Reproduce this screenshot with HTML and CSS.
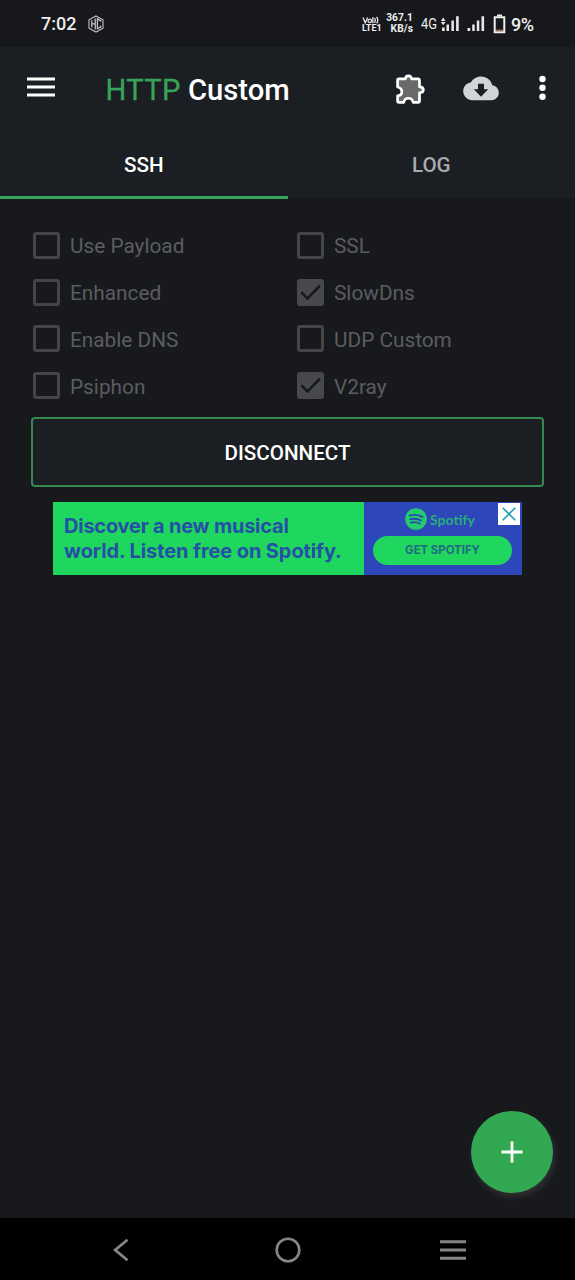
FILE: index.html
```html
<!DOCTYPE html>
<html lang="en">
<head>
<meta charset="utf-8">
<title>HTTP Custom</title>
<link rel="stylesheet" href="styles.css">
</head>
<body>
<div class="screen">
  <div class="status">
    <span class="clock">7:02</span>
    <svg class="hc" width="16" height="18" viewBox="0 0 16 18" fill="none" stroke="#c4c5c6" stroke-width="1.1">
      <path d="M8 .9 15 4.8v8.4L8 17.1 1 13.2V4.8z"/>
      <path d="M3.8 5.2v7.3M7.2 3.6v10.8M3.8 8.9h3.4M12.7 6.8V5.6L9.4 3.9v9.8l3.3-1.6v-1.5" stroke-width="1.3"/>
    </svg>
    <div class="volte">
      <svg width="19" height="8" viewBox="0 0 19 8" fill="none" stroke="#e8e8e8" stroke-width="1.3"><path d="M1 1.4 3.2 6.8 5.7 1.4M12.6 2.2q1.4 2 0 4.7M14.6.8q2.2 3 .2 6.6M10.9 1v6.3"/><circle cx="7.8" cy="4.9" r="1.7"/></svg>
      <span>LTE1</span>
    </div>
    <div class="speed"><span>367.1</span><span>KB/s</span></div>
    <span class="net">4G</span>
    <svg class="sig1" width="18" height="17" viewBox="0 0 18 17" fill="#e8e8e8">
      <path d="M-.1 5.9 2.2 2.6l2.3 3.3zM-.1 7.1h4.6L2.2 10.3zM1 12.5h2.7V16H1zM5.5 9.5H8V16H5.5zM10.4 5.5h2.5V16h-2.5zM15.1 1.3h2.6V16h-2.6z"/>
    </svg>
    <svg class="sig2" width="18" height="17" viewBox="0 0 18 17" fill="#e8e8e8">
      <path d="M.5 13.1h2.7V16H.5zM5.2 9.5h2.5V16H5.2zM9.8 5.5h2.5V16H9.8zM14.5 1.3h2.6V16h-2.6z"/>
    </svg>
    <svg class="battery" width="13" height="20" viewBox="0 0 13 20">
      <path d="M4 .5h5v2H4z" fill="#eee"/><path d="M1.7 3.2h9.6v15H1.7z" fill="none" stroke="#eee" stroke-width="2"/><path d="M3 16.2h7" stroke="#b98460" stroke-width="1.2"/>
    </svg>
    <span class="pct">9%</span>
  </div>

  <header class="head">
    <div class="toolbar">
      <svg class="menu" width="28" height="20" viewBox="0 0 28 20" stroke="#fff" stroke-width="2.9"><path d="M0 2h28M0 10h28M0 18h28"/></svg>
      <h1 class="title"><span class="accent">HTTP</span> Custom</h1>
      <svg class="puzzle" width="31" height="31" viewBox="0 0 30 30" fill="#6a6a6b" stroke="#fff" stroke-width="2.6" stroke-linejoin="round">
        <path d="M3.8 4.8H10C10.4 .9 15.6 .9 16 4.8h6.2q1.5 0 1.5 1.5v6.1c5 .2 5 5.6 0 5.8v7.9q0 1.4-1.4 1.4h-4.7c-1.2-5.4-8-5.4-9.2 0H3.7q-1.2 0-1.2-1.2v-5.1c5.5-.8 5.5-7.2 0-8.6V6q0-1.2 1.3-1.2z"/>
      </svg>
      <svg class="cloud" width="36" height="25" viewBox="0 0 36 25">
        <path d="M29.2 9.3C28.2 4.1 23.6.4 18 .4 13.6.4 9.8 2.8 7.9 6.5 3.4 7 .2 10.8.2 15.1c0 5 4.1 9.1 9.1 9.1h18.9c4.2 0 7.6-3.3 7.6-7.5 0-4-3-7.1-6.6-7.4z" fill="#d3d4d5"/>
        <path d="M15 7.8h6v5.5h4.2L18 20.7l-7.2-7.4H15z" fill="#1b1f23"/>
      </svg>
      <svg class="dots" width="7" height="26" viewBox="0 0 7 26" fill="#fff"><circle cx="3.5" cy="4" r="3.2"/><circle cx="3.5" cy="12.8" r="3.2"/><circle cx="3.5" cy="21.7" r="3.2"/></svg>
    </div>
    <nav class="tabs">
      <span class="tab active">SSH</span>
      <span class="tab">LOG</span>
    </nav>
  </header>

  <main class="main">
    <div class="options">
      <div class="opt"><i class="box"></i><span>Use Payload</span></div>
      <div class="opt"><i class="box"></i><span>SSL</span></div>
      <div class="opt"><i class="box"></i><span>Enhanced</span></div>
      <div class="opt"><i class="box on"><svg width="27" height="27" viewBox="0 0 26 26"><path d="M4.2 12.8 10.1 18.6 22 6.5" fill="none" stroke="#17191c" stroke-width="2.5"/></svg></i><span>SlowDns</span></div>
      <div class="opt"><i class="box"></i><span>Enable DNS</span></div>
      <div class="opt"><i class="box"></i><span>UDP Custom</span></div>
      <div class="opt"><i class="box"></i><span>Psiphon</span></div>
      <div class="opt"><i class="box on"><svg width="27" height="27" viewBox="0 0 26 26"><path d="M4.2 12.8 10.1 18.6 22 6.5" fill="none" stroke="#17191c" stroke-width="2.5"/></svg></i><span>V2ray</span></div>
    </div>
    <button class="disconnect">DISCONNECT</button>
    <div class="ad">
      <p class="adtext"><span class="line1">Discover a new musical</span><br><span class="line2">world. Listen free on Spotify.</span></p>
      <div class="adside">
        <div class="brand">
          <svg width="22" height="22" viewBox="0 0 22 22"><circle cx="11" cy="11" r="10.8" fill="#22cb6b"/><path d="M4.6 7.7q7-2 13 1.4M5.2 11.3q6-1.6 11 1.3M5.8 14.6q5-1.2 9 1.1" fill="none" stroke="#2c49b3" stroke-width="1.8" stroke-linecap="round"/></svg>
          <span>Spotify</span>
        </div>
        <div class="cta">GET SPOTIFY</div>
        <div class="close"><svg width="14" height="14" viewBox="0 0 14 14"><path d="M.7.7l12.6 12.6M13.3.7.7 13.3" stroke="#27a0b4" stroke-width="1.6"/></svg></div>
      </div>
    </div>
    <div class="fab"><svg width="22" height="22" viewBox="0 0 22 22"><path d="M11 .5v21M.5 11h21" stroke="#fff" stroke-width="2.8"/></svg></div>
  </main>

  <footer class="nav">
    <svg class="back" width="17" height="24" viewBox="0 0 17 24"><path d="M15.5 1.7 3.2 12l12.3 10.3" fill="none" stroke="#868686" stroke-width="2.8"/></svg>
    <svg class="home" width="26" height="26" viewBox="0 0 26 26"><circle cx="13" cy="13" r="11.3" fill="none" stroke="#868686" stroke-width="2.6"/></svg>
    <svg class="recent" width="26" height="20" viewBox="0 0 26 20"><path d="M0 1.7h26M0 10h26M0 18.3h26" stroke="#868686" stroke-width="2.9"/></svg>
  </footer>
</div>
</body>
</html>
```
FILE: styles.css
```css
* { box-sizing: border-box; }
body { margin: 0; background: #17191c; font-family: Roboto, "Liberation Sans", sans-serif; }
svg { display: block; flex: none; }
.screen { width: 575px; height: 1280px; display: flex; flex-direction: column; overflow: hidden; }

.status { height: 47px; flex: none; display: flex; align-items: center; padding-left: 41px; background: #17181b; color: #eee; white-space: nowrap; }
.clock { width: 35px; font-size: 18px; font-weight: 500; line-height: 20px; padding-top: 1px; }
.hc { margin-left: 12px; }
.volte { width: 20px; margin-left: 258px; display: flex; flex-direction: column; }
.volte span { font-size: 9px; font-weight: 700; line-height: 8px; }
.speed { width: 28px; margin-left: 4px; display: flex; flex-direction: column; align-items: flex-end; padding-right: 1px; font-size: 10.2px; font-weight: 700; line-height: 10.5px; letter-spacing: .1px; }
.net { width: 17px; margin-left: 7px; font-size: 15px; transform-origin: left; transform: scaleX(.86); }
.sig1 { margin-left: 3px; }
.sig2 { margin-left: 8px; }
.battery { margin-left: 8px; }
.pct { margin-left: 5px; font-size: 18px; font-weight: 500; letter-spacing: -.6px; padding-top: 1px; }

.head { height: 151px; flex: none; background: #1b1f23; }
.toolbar { height: 84px; display: flex; align-items: center; padding-left: 27px; }
.menu { margin-top: -4px; }
.title { margin: 1px 0 0 50.5px; width: 190px; font-size: 29.2px; font-weight: 500; line-height: 34px; color: #fff; white-space: nowrap; }
.accent { color: #38a35a; font-weight: 400; letter-spacing: .35px; -webkit-text-stroke: .3px #38a35a; }
.puzzle { margin: 0 0 0 99.5px; }
.cloud { margin-left: 37px; margin-top: -2px; }
.dots { margin-left: 40px; margin-top: -2px; }
.tabs { height: 68px; display: grid; grid-template-columns: 1fr 1fr; }
.tab { display: flex; align-items: center; justify-content: center; padding-top: 2px; font-size: 20.6px; font-weight: 500; color: #a9abad; border-bottom: 3px solid transparent; }
.tab.active { color: #fff; border-bottom-color: #39a35b; }

.main { flex: 1; position: relative; padding: 24px 31px 0; }
.options { display: grid; grid-template-columns: 264px 1fr; grid-auto-rows: 46.8px; margin-left: 2px; }
.opt { display: flex; align-items: center; gap: 10px; font-size: 20.8px; color: #5b5d60; white-space: nowrap; }
.opt span { padding-top: 2px; }
.box { flex: none; width: 27px; height: 27px; border: 3px solid #434548; border-radius: 3px; }
.box.on { border: 0; background: #47494c; }
.disconnect { display: block; width: 513px; height: 70px; margin: 8px 0 0; padding: 1px 0 0; background: #1b1f23; border: 2px solid #33894f; border-radius: 4px; color: #fff; font: 500 20.6px Roboto, sans-serif; }
.ad { display: flex; width: 469px; height: 73px; margin: 15px 0 0 22px; }
.adtext { width: 311px; margin: 0; padding: 12px 0 0 11px; background: #1fd65f; color: #2450a6; font: 700 20px/25px Inter, sans-serif; white-space: nowrap; }
.line1 { letter-spacing: -.23px; }
.line2 { letter-spacing: -.1px; }
.adside { position: relative; flex: 1; background: #2d46b9; padding-left: 9px; }
.brand { display: flex; align-items: center; gap: 3px; padding: 6px 0 0 32px; height: 28px; font: 700 14px Lato, sans-serif; color: #28ad7b; }
.cta { width: 139px; height: 29px; margin-top: 6px; border-radius: 15px; background: #1fd65f; color: #216b80; font: 700 11.4px/29px Inter, sans-serif; text-align: center; }
.close { position: absolute; right: 2px; top: 1px; width: 22px; height: 22px; background: #fff; display: flex; align-items: center; justify-content: center; }
.fab { position: absolute; right: 22px; bottom: 25px; width: 82px; height: 82px; border-radius: 50%; background: #33a853; box-shadow: 2px 4px 6px #303033; display: flex; align-items: center; justify-content: center; }

.nav { height: 62px; flex: none; background: #000; display: flex; align-items: center; padding: 1px 0 0 112px; }
.home { margin-left: 146px; }
.recent { margin-left: 139px; }
```
